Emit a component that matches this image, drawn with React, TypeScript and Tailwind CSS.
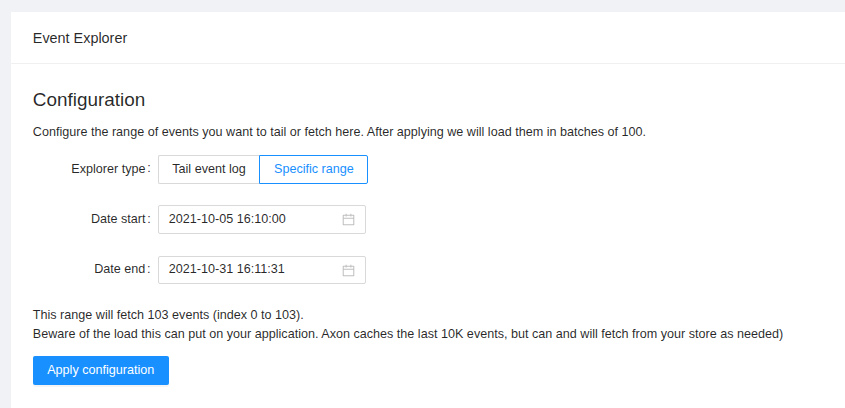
import type { ReactNode } from 'react';

function CalendarIcon() {
  return (
    <svg viewBox="64 64 896 896" className="size-[13px] shrink-0 text-black/25" fill="currentColor" aria-hidden="true">
      <path d="M880 184H712v-64c0-4.400-3.600-8-8-8h-56c-4.400 0-8 3.600-8 8v64H384v-64c0-4.400-3.600-8-8-8h-56c-4.400 0-8 3.600-8 8v64H144c-17.700 0-32 14.300-32 32v664c0 17.700 14.300 32 32 32h736c17.700 0 32-14.300 32-32V216c0-17.700-14.300-32-32-32zm-40 656H184V460h656v380zM184 392V256h128v48c0 4.400 3.600 8 8 8h56c4.400 0 8-3.600 8-8v-48h256v48c0 4.400 3.600 8 8 8h56c4.400 0 8-3.600 8-8v-48h128v136H184z" />
    </svg>
  );
}

function FormRow({ label, className, labelClass = 'h-[29px] pr-[7.2px]', colonClass = '', children }: { label: string; className: string; labelClass?: string; colonClass?: string; children: ReactNode }) {
  return (
    <div className={`flex items-start ${className}`}>
      <div className={`flex w-[125px] shrink-0 items-center justify-end ${labelClass}`}>
        <span>{label}</span>
        <span className={`ml-[1.8px] ${colonClass}`}>:</span>
      </div>
      {children}
    </div>
  );
}

function DateField({ value, className, textClass = '' }: { value: string; className: string; textClass?: string }) {
  return (
    <div className={`flex w-[208px] items-center justify-between rounded-[2px] border border-[#d9d9d9] pr-[10px] pl-[9.800px] ${className}`}>
      <span className={`leading-[19px] ${textClass}`}>{value}</span>
      <CalendarIcon />
    </div>
  );
}

export default function App() {
  return (
    <div className="h-[408px] overflow-hidden bg-[#f0f2f5] pt-[12px] pl-[11px] font-['Liberation_Sans',Arial,sans-serif] text-[12.6px] leading-[19px] text-black/85">
      <main className="h-full bg-white">
        <header className="flex h-[52px] items-center border-b border-[#f0f0f0] pt-[2px] pl-[21.800px] text-[14.4px]">
          Event Explorer
        </header>
        <section className="pt-[22px] pl-[22px]">
          <h2 className="-ml-[0.2px] text-[18.9px] leading-[28px]">Configuration</h2>
          <p className="mt-[9px] -ml-[0.2px]">
            Configure the range of events you want to tail or fetch here. After applying we will load them in batches of 100.
          </p>
          <FormRow label="Explorer type" className="mt-[13px]" colonClass="pb-[2px]">
            <div className="flex h-[29px]">
              <button className="w-[101px] rounded-l-[2px] border border-r-0 border-[#d9d9d9] pb-px">Tail event log</button>
              <button className="w-[109px] rounded-r-[2px] border border-[#1890ff] pb-px pl-[0.800px] text-[#1890ff]">Specific range</button>
            </div>
          </FormRow>
          <FormRow label="Date start" className="mt-[21px]">
            <DateField value="2021-10-05 16:10:00" className="h-[29px]" />
          </FormRow>
          <FormRow label="Date end" className="mt-[22px]" labelClass="h-[27px] pr-[7.4px]">
            <DateField value="2021-10-31 16:11:31" className="h-[28px]" textClass="pb-[2px]" />
          </FormRow>
          <p className="mt-[22px] -ml-[0.2px]">
            This range will fetch 103 events (index 0 to 103).
            <br />
            Beware of the load this can put on your application. Axon caches the last 10K events, but can and will fetch from your store as needed)
          </p>
          <button className="mt-[12px] h-[29px] w-[136px] rounded-[2px] bg-[#1890ff] pr-[0.5px] text-white shadow-[0_2px_0_rgba(0,0,0,0.043)]">
            Apply configuration
          </button>
        </section>
      </main>
    </div>
  );
}
